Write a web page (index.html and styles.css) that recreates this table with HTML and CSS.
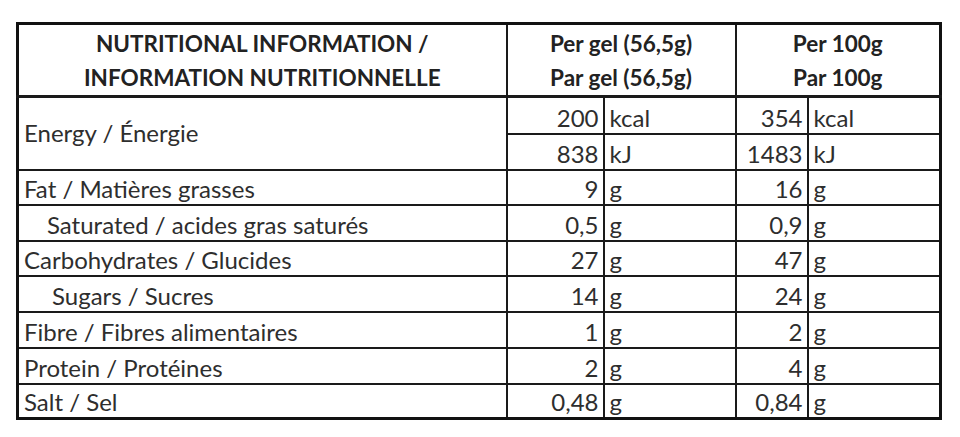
FILE: index.html
```html
<!DOCTYPE html>
<html lang="en">
<head>
<meta charset="utf-8">
<title>Nutritional information</title>
<link rel="stylesheet" href="styles.css">
</head>
<body>
<table class="nutri">
  <colgroup>
    <col class="c-name">
    <col class="c-val1">
    <col class="c-unit1">
    <col class="c-val2">
    <col class="c-unit2">
  </colgroup>
  <thead>
    <tr class="head">
      <th>NUTRITIONAL INFORMATION /<br>INFORMATION NUTRITIONNELLE</th>
      <th colspan="2">Per gel (56,5g)<br>Par gel (56,5g)</th>
      <th colspan="2">Per 100g<br>Par 100g</th>
    </tr>
  </thead>
  <tbody>
    <tr class="r37">
      <td class="name mid" rowspan="2">Energy / Énergie</td>
      <td class="val">200</td><td class="unit">kcal</td>
      <td class="val">354</td><td class="unit">kcal</td>
    </tr>
    <tr class="r36">
      <td class="val">838</td><td class="unit">kJ</td>
      <td class="val">1483</td><td class="unit">kJ</td>
    </tr>
    <tr class="r35">
      <td class="name">Fat / Matières grasses</td>
      <td class="val">9</td><td class="unit">g</td>
      <td class="val">16</td><td class="unit">g</td>
    </tr>
    <tr class="r36">
      <td class="name sub1">Saturated / acides gras saturés</td>
      <td class="val">0,5</td><td class="unit">g</td>
      <td class="val">0,9</td><td class="unit">g</td>
    </tr>
    <tr class="r35">
      <td class="name">Carbohydrates / Glucides</td>
      <td class="val">27</td><td class="unit">g</td>
      <td class="val">47</td><td class="unit">g</td>
    </tr>
    <tr class="r36">
      <td class="name sub2">Sugars / Sucres</td>
      <td class="val">14</td><td class="unit">g</td>
      <td class="val">24</td><td class="unit">g</td>
    </tr>
    <tr class="r36">
      <td class="name">Fibre / Fibres alimentaires</td>
      <td class="val">1</td><td class="unit">g</td>
      <td class="val">2</td><td class="unit">g</td>
    </tr>
    <tr class="r36">
      <td class="name">Protein / Protéines</td>
      <td class="val">2</td><td class="unit">g</td>
      <td class="val">4</td><td class="unit">g</td>
    </tr>
    <tr class="r35">
      <td class="name">Salt / Sel</td>
      <td class="val">0,48</td><td class="unit">g</td>
      <td class="val">0,84</td><td class="unit">g</td>
    </tr>
  </tbody>
</table>
</body>
</html>
```

FILE: styles.css
```css
html, body {
  background: #ffffff;
}
body {
  margin: 22px 0 0 16px;
  font-family: "Lato", "Open Sans", "Liberation Sans", sans-serif;
  color: #2e2e2e;
}
.nutri {
  border-collapse: collapse;
  table-layout: fixed;
  width: 926px;
  border: 3px solid #111111;
  font-size: 24px;
}
.c-name { width: 489px; }
.c-val1 { width: 97px; }
.c-unit1 { width: 132px; }
.c-val2 { width: 72px; }
.c-unit2 { width: 133px; }

.nutri th,
.nutri td {
  border: 2px solid #1a1a1a;
  padding: 0;
  white-space: nowrap;
  overflow: hidden;
}
.head {
  height: 70px;
}
.head th {
  border-bottom-width: 3px;
  font-weight: bold;
  font-size: 22.5px;
  color: #222222;
  line-height: 34px;
  text-align: center;
  vertical-align: top;
  padding-top: 2px;
}
.r35 { height: 35px; }
.r36 { height: 36px; }
.r37 { height: 37px; }

.nutri td {
  vertical-align: bottom;
  line-height: 26px;
  padding-bottom: 2px;
}
.name {
  text-align: left;
  padding-left: 5px !important;
}
.name.mid {
  vertical-align: middle;
  padding-bottom: 0;
}
.name.sub1 { padding-left: 28px !important; }
.name.sub2 { padding-left: 33px !important; }
.val {
  text-align: right;
  padding-right: 4px !important;
}
.unit {
  text-align: left;
  padding-left: 5px !important;
}
```
